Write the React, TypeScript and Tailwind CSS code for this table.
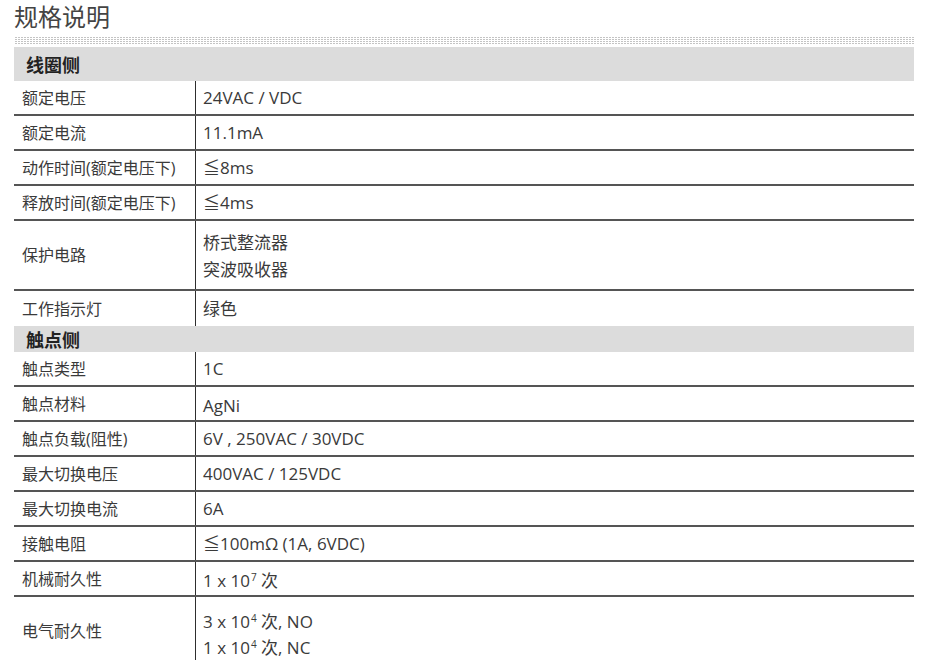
import React from "react";

type Row = { label: string; value: React.ReactNode; tall?: boolean };

const sup = (n: string) => (
  <span className="text-[10px] leading-none relative top-[-6px] ml-[1px]">{n}</span>
);

const coil: Row[] = [
  { label: "额定电压", value: "24VAC / VDC" },
  { label: "额定电流", value: "11.1mA" },
  { label: "动作时间(额定电压下)", value: "≦8ms" },
  { label: "释放时间(额定电压下)", value: "≦4ms" },
  {
    label: "保护电路",
    value: (
      <div className="flex flex-col gap-[1px] pt-[2px]">
        <span>桥式整流器</span>
        <span>突波吸收器</span>
      </div>
    ),
    tall: true,
  },
  { label: "工作指示灯", value: "绿色" },
];

const contact: Row[] = [
  { label: "触点类型", value: "1C" },
  { label: "触点材料", value: <span className="pt-[4px]">AgNi</span> },
  { label: "触点负载(阻性)", value: "6V , 250VAC / 30VDC" },
  { label: "最大切换电压", value: "400VAC / 125VDC" },
  { label: "最大切换电流", value: "6A" },
  { label: "接触电阻", value: "≦100mΩ (1A, 6VDC)" },
  { label: "机械耐久性", value: <span className="pt-[4px]">1 x 10{sup("7")} 次</span> },
  {
    label: "电气耐久性",
    value: (
      <div className="flex flex-col gap-0 pt-[8px]">
        <span>3 x 10{sup("4")} 次, NO</span>
        <span>1 x 10{sup("4")} 次, NC</span>
      </div>
    ),
    tall: true,
  },
];

function TableRow({ row, last }: { row: Row; last?: boolean }) {
  return (
    <div
      className={
        "flex " +
        (row.tall ? "h-[70px] " : "h-[35px] ") +
        (last ? "" : "border-b-2 border-[#555555]")
      }
    >
      <div className="w-[181px] shrink-0 flex items-center pl-[8px] text-[16px] text-[#3a3a3a]">
        {row.label}
      </div>
      <div className="w-px bg-[#2e2e2e] shrink-0" />
      <div className="flex-1 flex items-center pl-[7px] text-[17px] leading-[26px] text-[#3a3a3a]">
        {row.value}
      </div>
    </div>
  );
}

function Header({ title, h }: { title: string; h: string }) {
  return (
    <div className={"bg-[#dcdcdc] flex items-center pl-[12px] pt-[3px] text-[18px] font-bold text-[#222222] " + h}>
      {title}
    </div>
  );
}

export default function App() {
  return (
    <div
      className="w-[940px] h-[660px] overflow-hidden bg-white"
      style={{ fontFamily: '"Open Sans", "Noto Sans CJK SC", sans-serif' }}
    >
      <div className="ml-[14px] w-[900px]">
        <div className="h-[37px] text-[24px] leading-[34px] text-[#444444]">规格说明</div>
        <div className="h-[8px] bg-[linear-gradient(90deg,#ffffff_1px,transparent_1px),linear-gradient(#c4c4c4_1px,transparent_1px)] bg-[length:3px_2px]" />
        <div className="h-[2px]" />
        <Header title="线圈侧" h="h-[34px]" />
        {coil.map((r, i) => (
          <TableRow key={r.label} row={r} last={i === coil.length - 1} />
        ))}
        <Header title="触点侧" h="h-[26px]" />
        {contact.map((r) => (
          <TableRow key={r.label} row={r} />
        ))}
      </div>
    </div>
  );
}
